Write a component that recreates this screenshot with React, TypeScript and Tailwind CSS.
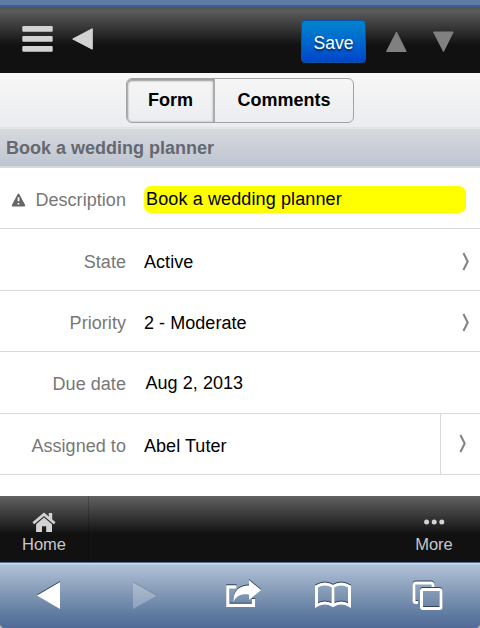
import React from "react";

const shadow = "[filter:drop-shadow(0_-1px_0_#33415a)]";

function Chevron() {
  return (
    <svg width="8" height="19" viewBox="0 0 8 19" fill="none" stroke="#858585" strokeWidth="2.1">
      <path d="M1.4 1 L5.7 9.5 L1.4 18" />
    </svg>
  );
}

function Row({ label, value, last = false, nav = false, warn = false, date = false }: {
  label: string; value: React.ReactNode; last?: boolean; nav?: boolean; warn?: boolean; date?: boolean;
}) {
  return (
    <div className="flex h-[61.4px] shrink-0 border-b border-[#d8d9d9] text-[18px] leading-5 tracking-[0.05px]">
      <div className="flex w-[126px] items-center justify-end gap-[9px] pt-[4px] text-[#777]">
        {warn && (
          <svg width="15" height="14" viewBox="0 0 15 14">
            <path d="M7.5 1.5 L13.3 12.5 H1.7Z" fill="#666" stroke="#666" strokeWidth="1.8" strokeLinejoin="round" />
            <path d="M7.5 4.3 V8.2 M7.5 10 V11.6" stroke="white" strokeWidth="1.7" />
          </svg>
        )}
        <span className="whitespace-nowrap">{label}</span>
      </div>
      <div className={date ? "flex flex-1 items-center pl-[19.5px] pt-[2px]" : warn ? "flex flex-1 items-center pl-[18px] pt-[2px]" : "flex flex-1 items-center pl-[18px] pt-[4px]"}>
        {value}
      </div>
      {nav && (
        <div className={last ? "flex w-[40px] items-center border-l border-[#d8d9d9] pl-[17.5px]" : "flex w-[18px] items-center pt-[4px]"}>
          <Chevron />
        </div>
      )}
    </div>
  );
}

export default function App() {
  return (
    <div className="flex h-[628px] w-[480px] flex-col overflow-hidden bg-white font-['Liberation_Sans',Arial,sans-serif] text-black">
      <div className="h-[7px] shrink-0 border-b-2 border-[#3d6090] bg-[#5e7ba5]" />
      <header className="flex h-[66px] shrink-0 items-start bg-[linear-gradient(#535353_0,#5b5b5b_4px,#111_38px,#111)]">
        <svg className="ml-[22px] mt-[18px]" width="31" height="28" fill="#d3d3d3">
          <rect x="0.3" y="1" width="30.4" height="5.7" rx="1" />
          <rect x="0.3" y="11" width="30.4" height="5.7" rx="1" />
          <rect x="0.3" y="21" width="30.4" height="5.7" rx="1" />
        </svg>
        <svg className="ml-[18px] mt-[20px]" width="24" height="24" fill="#d3d3d3" stroke="#d3d3d3" strokeLinejoin="round">
          <path d="M1.7 12 L21.3 1.7 V22.2Z" />
        </svg>
        <div className="ml-[206px] mt-[13px] flex h-[43px] w-[65px] items-center justify-center rounded-[4px] border border-[#0754a5] bg-linear-to-b from-[#0585cc] to-[#0044cc] pt-[4px] text-[17.5px] text-white [text-shadow:0_2px_2px_#0008]">Save</div>
        <svg className="ml-[19px] mt-[23px]" width="23" height="23" fill="#808080" stroke="#808080" strokeLinejoin="round">
          <path d="M11.5 2 L21.2 21.5 H1.5Z" />
        </svg>
        <svg className="ml-[24px] mt-[23px]" width="23" height="23" fill="#808080" stroke="#808080" strokeLinejoin="round">
          <path d="M1.5 2 H21.2 L11.5 21.5Z" />
        </svg>
      </header>
      <div className="flex h-[56px] shrink-0 justify-center border-b-2 border-[#e2e4e5] bg-linear-to-b from-[#f7f7f7] to-[#ebecf0] pt-[5px]">
        <div className="flex h-[45px] w-[228px] rounded-[6px] border border-[#a2a3a3] text-[18px] font-bold">
          <div className="flex w-[88px] items-center justify-center rounded-l-[5px] border-r border-[#aaa] shadow-[inset_0_1px_2px_1px_#999]">Form</div>
          <div className="flex flex-1 items-center justify-center">Comments</div>
        </div>
      </div>
      <div className="flex h-[39px] shrink-0 items-center border-b-2 border-[#d8d9da] bg-linear-to-b from-[#d6dade] to-[#bfc5d0] pl-[6px] pt-[2px] text-[18px] font-bold text-[#656870]">Book a wedding planner</div>
      <main className="flex h-[328px] shrink-0 flex-col">
        <Row label="Description" warn value={<div className="flex h-[27px] w-[322px] items-center rounded-[7px] bg-[#ff0] pb-px pl-[2px] tracking-[0.12px]">Book a wedding planner</div>} />
        <Row label="State" value="Active" nav />
        <Row label="Priority" value="2 - Moderate" nav />
        <Row label="Due date" value="Aug 2, 2013" date />
        <Row label="Assigned to" value="Abel Tuter" nav last />
      </main>
      <nav className="flex h-[66px] shrink-0 justify-between bg-[linear-gradient(#626262,#111_38px,#111)] text-[16.5px] leading-5 text-[#c8c8c8]">
        <div className="flex w-[89px] flex-col items-center border-r border-[#0003] pt-[16px]">
          <svg width="24" height="21" viewBox="0 0 24 21" className="shrink-0">
            <path d="M1.3 11.3 L12 2.3 L22.7 11.3" fill="none" stroke="#d3d3d3" strokeWidth="2.8" />
            <path d="M16.8 1 H20.2 V8.5 L16.8 5Z" fill="#d3d3d3" />
            <path d="M12 5.6 L20 12.2 V20 H14.2 V14.2 H10 V20 H4.1 V12.2Z" fill="#d3d3d3" />
          </svg>
          <span className="mt-px">Home</span>
        </div>
        <div className="flex w-[92px] flex-col items-center pt-[16px]">
          <svg width="24" height="21" fill="#d3d3d3" className="shrink-0">
            <circle cx="4.6" cy="10" r="2.5" /><circle cx="12.2" cy="10" r="2.5" /><circle cx="19.8" cy="10" r="2.5" />
          </svg>
          <span className="mt-px">More</span>
        </div>
      </nav>
      <footer className="flex h-[66px] shrink-0 border-t border-[#526e8f] bg-[linear-gradient(#dce5ef_0,#b1c0d8_2px,#8299b5_30px,#5d789f_53px,#526c99)]">
        <svg width="480" height="65" viewBox="0 563 480 65" fill="white">
          <path className={shadow} d="M60 582 V609 L37 595.5Z" />
          <path d="M133 582 L157 595.5 L133 609Z" opacity=".25" />
          <path d="M133 582 L157 595.5" stroke="#52657f" opacity=".4" />
          <g className={shadow}>
            <path d="M236.5 586.8 H227.8 V605.3 H253.5 V599" fill="none" stroke="white" strokeWidth="3.2" />
            <path d="M233.5 602 C233 591 239 585.5 249 585.5 V580 L261 590 L249 600 V594.5 C241 593.5 236 596 233.5 602Z" />
          </g>
          <g className={shadow} fill="none" stroke="white" strokeWidth="3">
            <path d="M316.5 605.5 V586.5 Q325 581.5 333 586.5 Q341 581.5 349.5 586.5 V605.5 Q341 600.5 333 605.5 Q325 600.5 316.5 605.5Z M333 586.5 V605.5" />
          </g>
          <g className={shadow} fill="none" stroke="white" strokeWidth="3">
            <path d="M418 602.5 H416 Q414 602.5 414 600.5 V585 Q414 583 416 583 H431 Q433 583 433 585 V587" />
            <rect x="421.5" y="589.5" width="19.5" height="19" rx="1.5" />
          </g>
          <path d="M0 625 V628 H3Z M480 625 V628 H477Z" fill="#b5b5b0" />
        </svg>
      </footer>
    </div>
  );
}
